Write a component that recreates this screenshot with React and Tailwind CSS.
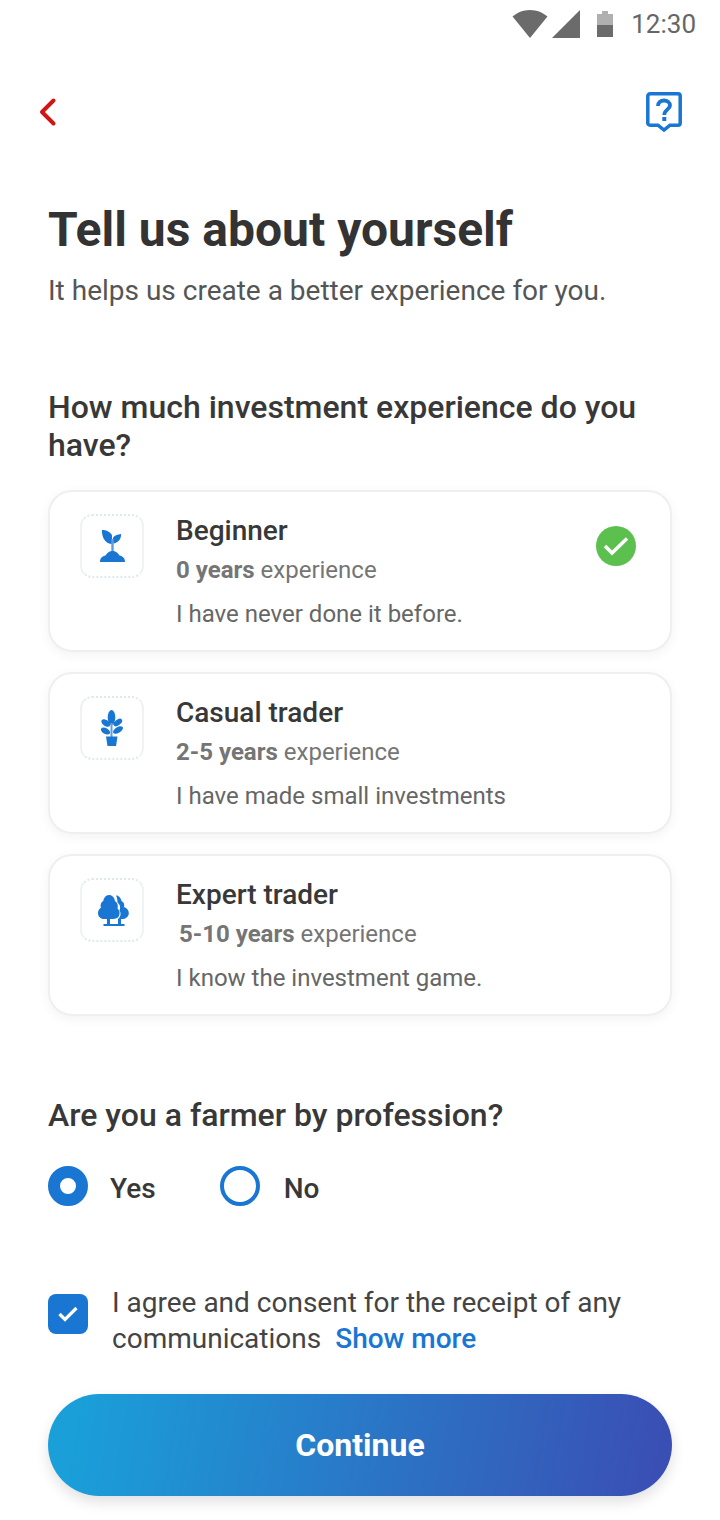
const levels = [
  { title: 'Beginner', years: '0 years', note: 'I have never done it before.', icon: 'sprout', selected: true },
  { title: 'Casual trader', years: '2-5 years', note: 'I have made small investments', icon: 'plant' },
  { title: 'Expert trader', years: '5-10 years', note: 'I know the investment game.', icon: 'trees', indent: true },
]

function LevelIcon({ name }) {
  if (name === 'sprout') {
    return (
      <svg width="25" height="32" viewBox="0 0 25 32" fill="#1976d2">
        <path d="M2 0C6 0 11 2 12 5.500V14C6 14 1.500 8 2 0Z" />
        <path d="M21 4C21.500 9 18 13 13 13.500V7.500C15 5 18 4.500 21 4Z" />
        <rect x="11.300" y="9" width="2.400" height="13" fill="#5c9fe0" />
        <path d="M0 32C0 28 2.500 26 5.500 25.500C7 23 9.500 21 12.500 21C15.500 21 18 23 19.500 25.500C22.500 26 25 28 25 32Z" />
      </svg>
    )
  }
  if (name === 'plant') {
    return (
      <svg width="22" height="36" viewBox="0 0 22 36" fill="#1976d2">
        <ellipse cx="10.500" cy="7.500" rx="3.800" ry="7.500" />
        <ellipse cx="4.800" cy="13" rx="5" ry="3" transform="rotate(35 4.800 13)" />
        <ellipse cx="16.800" cy="12.500" rx="5" ry="2.800" transform="rotate(-35 16.800 12.500)" />
        <ellipse cx="4.500" cy="21" rx="5" ry="3" transform="rotate(30 4.500 21)" />
        <ellipse cx="17" cy="20" rx="5.500" ry="2.800" transform="rotate(-30 17 20)" />
        <rect x="9.500" y="13" width="2" height="14" fill="#5c9fe0" />
        <path d="M5 26.500H16.500L15 36H6.500Z" />
      </svg>
    )
  }
  return (
    <svg width="31" height="31" viewBox="0 0 31 31" fill="#1976d2" className="ml-[2px]">
      <path d="M18 0.500C21 0.500 23 3 23.500 6C25.800 7 26.800 9.500 26 12C29 13 31 15.500 30.800 18.500C30.500 22 27.500 24 24 24H20C22.500 22 23.500 18.500 21.500 15.500C23 12 21.500 9 19.500 7.500C19.500 5 19 2.500 18 0.500Z" />
      <path d="M11 0C14 0 16.500 2.500 17 6C19.500 7.500 20.500 10.500 19.500 13.500C21.500 15 22.300 18 21 21C19.800 23.300 17.500 24 15 24H6C2.500 24 0 21.500 0 18C0 15.500 1.500 13.500 3 12.800C2 9.800 3.200 7 5.300 6C5.800 2.800 8 0 11 0Z" />
      <rect x="9" y="24" width="3" height="5" />
      <rect x="20" y="24" width="3" height="5" />
      <rect x="5.500" y="29" width="21" height="2" />
    </svg>
  )
}

function LevelCard({ level }) {
  return (
    <div className="relative flex h-[162px] rounded-[24px] border-2 border-[#efefef] bg-white pl-[30px] pt-[22px] shadow-[0_3px_12px_rgba(0,0,0,0.05)]">
      <div className="flex h-16 w-16 shrink-0 items-center justify-center rounded-xl border-2 border-dotted border-x-[#eff3f5] border-y-[#dfe9f0] [border-left-style:solid] [border-right-style:solid]">
        <LevelIcon name={level.icon} />
      </div>
      <div className="ml-8 flex flex-col">
        <div className="-mt-[1px] text-[28px] leading-[36px] font-medium text-[#383838]">{level.title}</div>
        <div className={`mt-[3px] text-[24px] leading-[36px] text-[#757575] ${level.indent ? 'pl-[3px]' : ''}`}>
          <span className="font-bold">{level.years}</span> experience
        </div>
        <div className="mt-[8px] text-[24px] leading-[36px] text-[#666666]">{level.note}</div>
      </div>
      {level.selected && (
        <div className="absolute right-[34px] top-[34px] flex h-10 w-10 items-center justify-center rounded-full bg-[#5cc04e]">
          <svg width="26" height="20" viewBox="0 0 26 20" fill="none" stroke="white" strokeWidth="3.500">
            <path d="M2 10L9 17L24 2.500" />
          </svg>
        </div>
      )}
    </div>
  )
}

export default function App() {
  return (
    <div className="flex h-[1520px] w-[720px] flex-col overflow-hidden bg-white font-['Roboto',sans-serif]">
      {/* Status bar */}
      <div className="flex h-[48px] items-center justify-end pr-6">
        <svg width="36" height="28" viewBox="0 0 36 28" fill="#6b6b6b" className="mb-[1px]">
          <path d="M18 28L0.500 6.500C5 2.800 11 0 18 0C25 0 31 2.800 35.500 6.500Z" />
        </svg>
        <svg width="28" height="28" viewBox="0 0 28 28" fill="#6b6b6b" className="mb-[1px] ml-[4px]">
          <path d="M28 0V28H0Z" />
        </svg>
        <svg width="16" height="26" viewBox="0 0 16 26" className="ml-[17px]">
          <path d="M0 3H5V0H11V3H16V14H0Z" fill="#b0b0b0" />
          <rect y="14" width="16" height="12" fill="#6b6b6b" />
        </svg>
        <span className="ml-[18px] text-[26px] leading-[48px] text-[#666666]">12:30</span>
      </div>

      {/* Nav */}
      <div className="mt-[44px] flex h-[40px] items-center justify-between pl-[38px] pr-[38px]">
        <svg width="20" height="30" viewBox="0 0 20 30" fill="none" stroke="#d01515" strokeWidth="4" strokeLinecap="round" strokeLinejoin="round">
          <path d="M15.500 3.500L4 15L15.500 26.500" />
        </svg>
        <svg width="36" height="40" viewBox="0 0 36 40" fill="none">
          <path d="M4 1.800H32C33.200 1.800 34.200 2.800 34.200 4V31C34.200 32.200 33.200 33.200 32 33.200H24L18 38L12 33.200H4C2.800 33.200 1.800 32.200 1.800 31V4C1.800 2.800 2.800 1.800 4 1.800Z" stroke="#1976d2" strokeWidth="3.500" />
          <path d="M12 14C12 10.500 14.500 8.500 18 8.500C21.500 8.500 24 10.500 24 13.500C24 17.500 18.300 17.500 18.300 23" stroke="#1976d2" strokeWidth="3.800" />
          <rect x="16.300" y="25" width="4" height="4" fill="#1976d2" />
        </svg>
      </div>

      <div className="flex flex-col px-12">
        <h1 className="mt-[70px] text-[48px] leading-[56px] font-bold text-[#333333]">Tell us about yourself</h1>
        <p className="mt-[15px] text-[28px] leading-[36px] text-[#555555]">It helps us create a better experience for you.</p>

        <h2 className="mt-[79px] text-[32px] leading-[38px] font-medium text-[#383838]">How much investment experience do you have?</h2>

        <div className="mt-[26px] flex flex-col gap-5">
          {levels.map((level) => (
            <LevelCard key={level.title} level={level} />
          ))}
        </div>

        <h2 className="mt-[80px] text-[32px] leading-[38px] font-medium text-[#383838]">Are you a farmer by profession?</h2>

        <div className="mt-[29px] flex items-center">
          <div className="h-10 w-10 rounded-full border-[12px] border-[#1976d2] bg-white" />
          <span className="ml-[22px] pt-[6px] text-[28px] leading-10 font-medium text-[#383838]">Yes</span>
          <div className="ml-[64px] h-10 w-10 rounded-full border-[4px] border-[#1976d2] bg-white" />
          <span className="ml-[24px] pt-[6px] text-[28px] leading-10 font-medium text-[#383838]">No</span>
        </div>

        <div className="mt-[75px] flex">
          <div className="mt-[10px] flex h-10 w-10 shrink-0 items-center justify-center rounded-lg bg-[#1976d2]">
            <svg width="20" height="16" viewBox="0 0 20 16" fill="none" stroke="white" strokeWidth="3.200">
              <path d="M1.500 8L7 13.500L18.500 2" />
            </svg>
          </div>
          <div className="ml-6 pt-[1px] text-[28px] leading-[36px] text-[#444444]">
            <div>I agree and consent for the receipt of any</div>
            <div className="flex gap-[14px]">
              <span>communications</span>
              <span className="font-medium text-[#1976d2]">Show more</span>
            </div>
          </div>
        </div>

        <button className="mt-[37px] h-[102px] w-full rounded-full bg-[linear-gradient(100deg,#1a9fd9_5%,#3a4fb4_97%)] text-[32px] font-bold text-white shadow-[0_6px_14px_rgba(0,0,0,0.12)]">
          Continue
        </button>
      </div>
    </div>
  )
}
